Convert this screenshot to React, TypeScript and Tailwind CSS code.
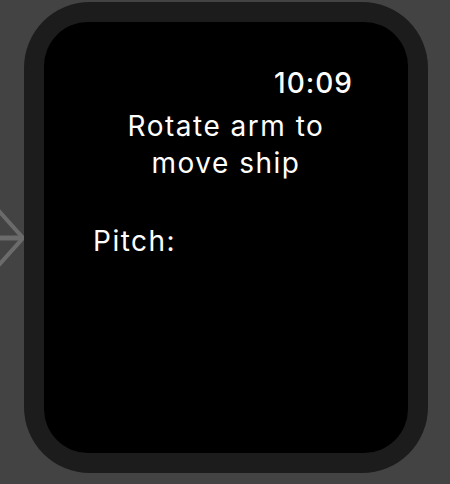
export default function App() {
  return (
    <div className="w-[450px] h-[484px] bg-[#434343] flex items-start overflow-hidden" style={{ fontFamily: 'Inter, "Noto Sans", sans-serif' }}>
      <div className="w-[24px] h-[475px] flex items-center">
        <svg width="24" height="60" viewBox="0 0 24 60" className="block">
          <path d="M-2 2 L23 30 L-2 58" fill="none" stroke="#6b6b6b" strokeWidth="4" />
          <path d="M0 30 H23" stroke="#6b6b6b" strokeWidth="5" />
        </svg>
      </div>
      <div className="mt-[2px] w-[404px] h-[471px] rounded-[66px] bg-[#1c1c1c] p-[20px]">
        <div className="h-full rounded-[44px] bg-black text-white flex flex-col">
          <div className="flex justify-end pr-[55px] pt-[43px] text-[28px] leading-[36px] font-medium tracking-[1px]">10:09</div>
          <div className="mt-[7px] text-center text-[28px] leading-[37px] font-normal tracking-[1.5px]">
            Rotate arm to
            <br />
            move ship
          </div>
          <div className="mt-[41px] pl-[49px] text-[28px] leading-[36px] tracking-[1.5px]">Pitch:</div>
        </div>
      </div>
    </div>
  )
}
